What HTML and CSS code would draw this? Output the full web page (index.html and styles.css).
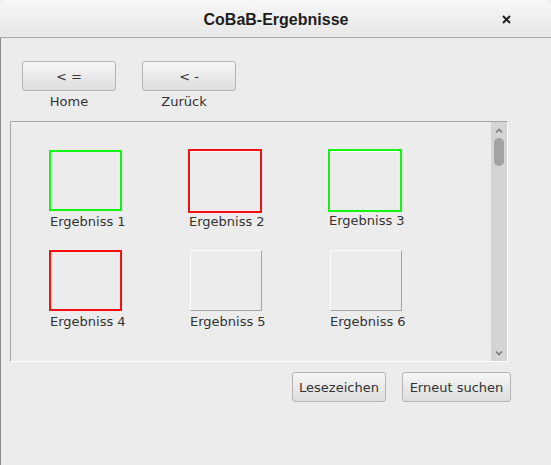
FILE: index.html
```html
<!DOCTYPE html>
<html lang="de">
<head>
<meta charset="utf-8">
<title>CoBaB-Ergebnisse</title>
<link rel="stylesheet" href="styles.css">
</head>
<body>
<div class="window">
  <div class="titlebar">
    <span class="title">CoBaB-Ergebnisse</span>
    <svg class="close" width="9" height="9" viewBox="0 0 9 9"><path d="M1 1L8 8M8 1L1 8" stroke="#222" stroke-width="2"/></svg>
  </div>
  <div class="content">
    <div class="nav">
      <div class="nav-item">
        <button class="btn nav-btn">&lt; =</button>
        <span class="nav-label">Home</span>
      </div>
      <div class="nav-item">
        <button class="btn nav-btn">&lt; -</button>
        <span class="nav-label">Zurück</span>
      </div>
    </div>
    <div class="scrollpane">
      <div class="grid">
        <div class="item"><div class="thumb green"></div><span class="caption">Ergebniss 1</span></div>
        <div class="item"><div class="thumb red skew"></div><span class="caption">Ergebniss 2</span></div>
        <div class="item"><div class="thumb green wide"></div><span class="caption">Ergebniss 3</span></div>
        <div class="item"><div class="thumb red"></div><span class="caption">Ergebniss 4</span></div>
        <div class="item"><div class="thumb plain"></div><span class="caption">Ergebniss 5</span></div>
        <div class="item"><div class="thumb plain"></div><span class="caption">Ergebniss 6</span></div>
      </div>
      <div class="scrollbar">
        <svg class="arrow" width="8" height="5" viewBox="0 0 8 5"><path d="M1 4.5L4 1.5L7 4.5" stroke="#7d7d7d" stroke-width="1.6" fill="none"/></svg>
        <div class="thumb-bar"></div>
        <div class="track"></div>
        <svg class="arrow" width="8" height="5" viewBox="0 0 8 5"><path d="M1 0.5L4 3.5L7 0.5" stroke="#7d7d7d" stroke-width="1.6" fill="none"/></svg>
      </div>
    </div>
    <div class="actions">
      <button class="btn act-btn">Lesezeichen</button>
      <button class="btn act-btn wide-btn">Erneut suchen</button>
    </div>
  </div>
</div>
</body>
</html>
```
FILE: styles.css
```css
html, body {
  margin: 0;
  padding: 0;
  background: #ececec;
}
body {
  font-family: "DejaVu Sans", sans-serif;
  font-size: 13px;
  color: #333;
}
.window {
  width: 551px;
  height: 465px;
  display: flex;
  flex-direction: column;
  background: #ececec;
  border-radius: 6px 6px 0 0;
  overflow: hidden;
}
.titlebar {
  height: 37px;
  flex: none;
  border-bottom: 1px solid #a8a8a8;
  background: linear-gradient(#f7f7f7, #e7e7e7);
  display: flex;
  align-items: center;
  justify-content: center;
  position: relative;
  box-sizing: content-box;
}
.title {
  font-family: "Liberation Sans", Arial, sans-serif;
  font-weight: bold;
  font-size: 16px;
  color: #1e1e1e;
  padding-top: 3px;
  padding-left: 1px;
}
.close {
  position: absolute;
  right: 40px;
  top: 15px;
}
.content {
  flex: 1;
  border-left: 1px solid #8a8a8a;
  padding: 23px 0 0 9px;
  display: flex;
  flex-direction: column;
}
.nav {
  display: flex;
  gap: 26px;
  margin-left: 12px;
}
.nav-item {
  display: flex;
  flex-direction: column;
  align-items: center;
  width: 94px;
}
.btn {
  font-family: "DejaVu Sans", sans-serif;
  font-size: 13px;
  color: #333;
  height: 30px;
  border: 1px solid #b4b4b4;
  border-radius: 3px;
  background: linear-gradient(#f6f6f6, #dedede);
  padding: 0;
  box-sizing: border-box;
}
.nav-btn {
  width: 94px;
}
.nav-label {
  margin-top: 3px;
  line-height: 16px;
}
.nav-item:last-child .nav-label {
  margin-right: 10px;
}
.scrollpane {
  margin-top: 11px;
  width: 498px;
  height: 241px;
  box-sizing: border-box;
  border-top: 1px solid #a6a6a6;
  border-left: 1px solid #a6a6a6;
  border-right: 1px solid #fbfbfb;
  border-bottom: 1px solid #fbfbfb;
  display: flex;
}
.grid {
  flex: 1;
  display: grid;
  grid-template-columns: repeat(3, 140px);
  grid-auto-rows: 101px;
  padding: 27px 0 0 38px;
}
.item {
  display: flex;
  flex-direction: column;
  align-items: flex-start;
}
.thumb {
  width: 73px;
  height: 61px;
  box-sizing: border-box;
}
.green {
  border: 2px solid #13f513;
  margin-top: 1px;
}
.green.wide {
  margin-top: 0;
  margin-left: -1px;
  width: 74px;
  height: 63px;
  box-shadow: inset 1px 1px 0 #fff;
}
.red {
  border: 2px solid #f50f0f;
}
.skew {
  margin-left: -1px;
  width: 74px;
  height: 64px;
  box-shadow: inset 1px 1px 0 #fff;
}
.plain {
  margin-left: 1px;
  width: 72px;
  border-top: 1px solid #fdfdfd;
  border-left: 1px solid #fdfdfd;
  border-right: 1px solid #a3a3a3;
  border-bottom: 1px solid #a3a3a3;
}
.caption {
  margin-top: 2px;
  margin-left: 1px;
  line-height: 17px;
  white-space: nowrap;
}
.skew + .caption,
.wide + .caption {
  margin-top: 0;
  margin-left: 0;
}
.scrollbar {
  width: 16px;
  background: #d4d4d4;
  display: flex;
  flex-direction: column;
  align-items: center;
}
.arrow {
  flex: none;
  margin-top: 6px;
}
.thumb-bar {
  margin-top: 5px;
  width: 10px;
  height: 28px;
  border-radius: 5px;
  background: #a3a3a3;
  flex: none;
}
.track {
  flex: 1;
}
.scrollbar .arrow:last-child {
  margin-top: 0;
  margin-bottom: 5px;
}
.actions {
  display: flex;
  justify-content: flex-end;
  gap: 16px;
  margin-top: 10px;
  padding-right: 40px;
}
.act-btn {
  width: 94px;
}
.wide-btn {
  width: 109px;
}
```
